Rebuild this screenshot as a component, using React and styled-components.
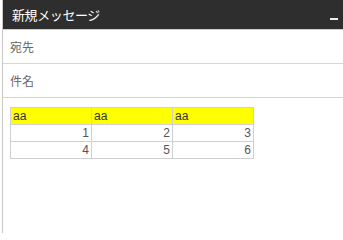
import styled, { createGlobalStyle } from "styled-components";

const GlobalStyle = createGlobalStyle`
  html, body {
    margin: 0;
    padding: 0;
    background: #fff;
  }
  body {
    font-family: "Liberation Sans", "Noto Sans CJK JP", sans-serif;
  }
`;

const Page = styled.div`
  width: 343px;
  height: 233px;
  overflow: hidden;
  background: #fff;
  padding-left: 2px;
  box-sizing: border-box;
`;

const Window = styled.div`
  height: 100%;
  border-left: 1px solid #c8c8c8;
  display: flex;
  flex-direction: column;
`;

const Header = styled.div`
  height: 29px;
  background: #2e2e2e;
  color: #fff;
  display: flex;
  align-items: center;
  justify-content: space-between;
  padding: 0 5px 0 9px;
  border-bottom: 1px solid #cfcfcf;
`;

const Title = styled.span`
  font-family: "Noto Sans CJK JP", sans-serif;
  font-size: 13px;
  letter-spacing: -0.4px;
`;

const Minimize = styled.span`
  width: 8px;
  height: 2px;
  margin-top: 8px;
  background: #eee;
`;

const Field = styled.div`
  height: 33px;
  display: flex;
  align-items: center;
  padding-left: 7px;
  border-bottom: 1px solid #d6d6d6;
  font-family: "Noto Sans CJK JP", sans-serif;
  font-size: 12px;
  color: #666;
`;

const Body = styled.div`
  padding: 9px 0 0 7px;
`;

const Table = styled.table`
  border-collapse: collapse;
  font-family: "Liberation Sans", sans-serif;
  font-size: 12px;
`;

const Cell = styled.td`
  width: 76px;
  height: 16px;
  padding: 0 2px;
  border: 1px solid #d0d0d0;
  text-align: ${(props) => (props.head ? "left" : "right")};
  background: ${(props) => (props.head ? "#ffff00" : "#fff")};
  color: ${(props) => (props.head ? "#333" : "#555")};
`;

const rows = [
  [1, 2, 3],
  [4, 5, 6],
];

export default function App() {
  return (
    <>
      <GlobalStyle />
      <Page>
        <Window>
          <Header>
            <Title>新規メッセージ</Title>
            <Minimize />
          </Header>
          <Field>宛先</Field>
          <Field>件名</Field>
          <Body>
            <Table>
              <tbody>
                <tr>
                  <Cell head>aa</Cell>
                  <Cell head>aa</Cell>
                  <Cell head>aa</Cell>
                </tr>
                {rows.map((row, i) => (
                  <tr key={i}>
                    {row.map((n) => (
                      <Cell key={n}>{n}</Cell>
                    ))}
                  </tr>
                ))}
              </tbody>
            </Table>
          </Body>
        </Window>
      </Page>
    </>
  );
}
